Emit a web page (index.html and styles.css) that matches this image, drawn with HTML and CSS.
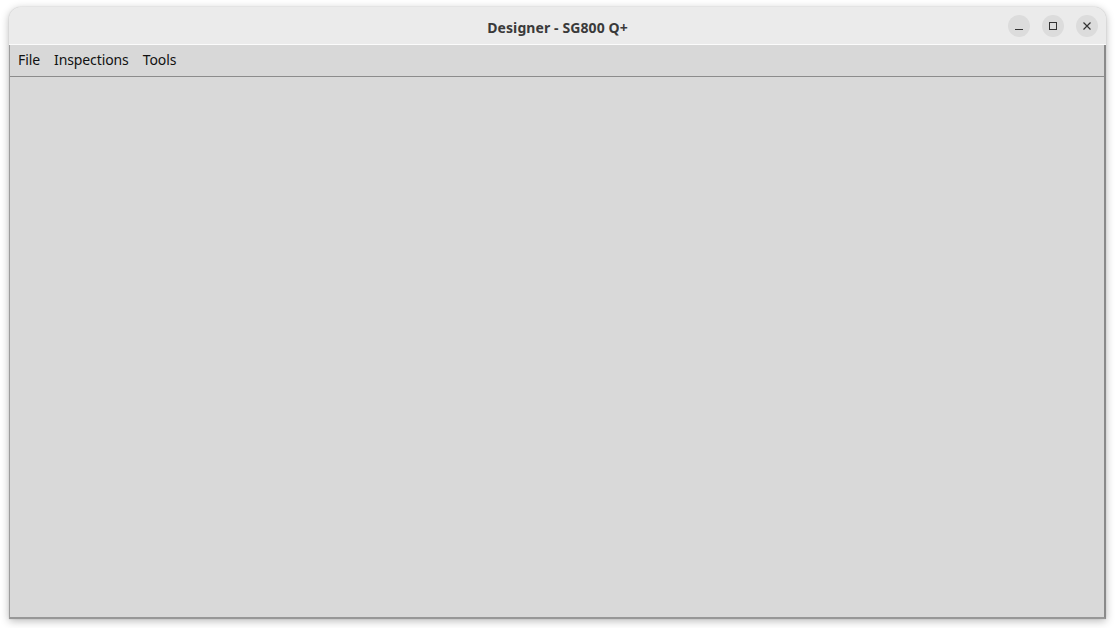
FILE: index.html
```html
<!DOCTYPE html>
<html>
<head>
<meta charset="utf-8">
<link rel="stylesheet" href="styles.css">
</head>
<body>
<div class="window">
  <div class="titlebar">
    <div class="title">Designer - SG800 Q+</div>
    <div class="controls">
      <div class="btn"><svg width="10" height="10" viewBox="0 0 10 10"><path d="M1 8.5H9" stroke="#333" stroke-width="1"/></svg></div>
      <div class="btn"><svg width="10" height="10" viewBox="0 0 10 10"><rect x="1.5" y="1.5" width="7" height="7" fill="none" stroke="#333" stroke-width="1"/></svg></div>
      <div class="btn"><svg width="10" height="10" viewBox="0 0 10 10"><path d="M1.5 1.5L8.5 8.5M8.5 1.5L1.5 8.5" stroke="#333" stroke-width="1.2"/></svg></div>
    </div>
  </div>
  <div class="frame">
    <div class="menubar">
      <span class="menu">File</span>
      <span class="menu">Inspections</span>
      <span class="menu">Tools</span>
    </div>
    <div class="content"></div>
  </div>
</div>
</body>
</html>
```
FILE: styles.css
```css
html, body {
  margin: 0;
  padding: 0;
  background: #ffffff;
}
body {
  width: 1115px;
  height: 628px;
  padding: 7px 9px 9px 9px;
  box-sizing: border-box;
  display: flex;
  font-family: "Noto Sans", "DejaVu Sans", sans-serif;
}
.window {
  flex: 1;
  display: flex;
  flex-direction: column;
  border-radius: 12px 12px 0 0;
  box-shadow: 0 2px 8px rgba(0,0,0,0.28), 0 0 1px rgba(0,0,0,0.3);
  overflow: hidden;
  background: #ebebeb;
}
.titlebar {
  height: 37px;
  flex: none;
  display: flex;
  align-items: center;
  justify-content: center;
  position: relative;
  background: #ebebeb;
  border-bottom: 1px solid #fbfbfb;
}
.title {
  font-weight: bold;
  font-size: 14px;
  color: #3a3a3a;
  letter-spacing: 0.1px;
  padding-top: 3px;
}
.controls {
  position: absolute;
  right: 8px;
  top: 8px;
  display: flex;
  gap: 12px;
}
.btn {
  width: 22px;
  height: 22px;
  border-radius: 50%;
  background: #dcdcdc;
  display: flex;
  align-items: center;
  justify-content: center;
}
.frame {
  flex: 1;
  display: flex;
  flex-direction: column;
  background: #d9d9d9;
  border-left: 1px solid #9c9c9c;
  border-right: 2px solid #8a8a8a;
  border-bottom: 2px solid #979797;
}
.menubar {
  height: 32px;
  flex: none;
  display: flex;
  align-items: center;
  padding-left: 8px;
  padding-bottom: 3px;
  box-sizing: border-box;
  gap: 14px;
  border-bottom: 1px solid #8c8c8c;
  background: #d8d8d8;
}
.menu {
  font-size: 14px;
  color: #111;
  letter-spacing: -0.1px;
}
.content {
  flex: 1;
  background: #d9d9d9;
}
```
